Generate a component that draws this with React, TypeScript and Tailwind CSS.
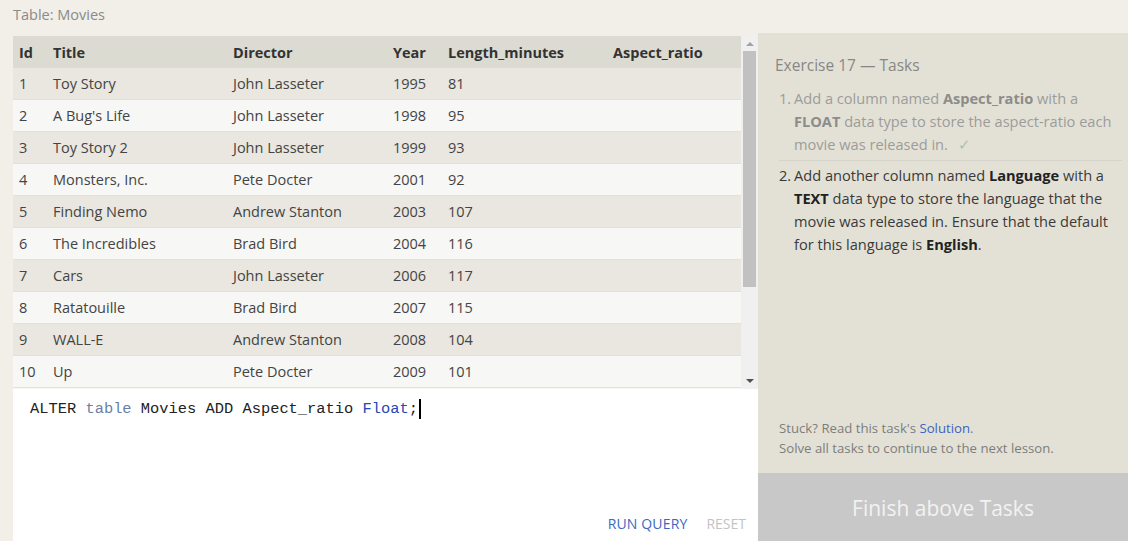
import React from 'react';

const movies = [
  { id: 1, title: 'Toy Story', director: 'John Lasseter', year: 1995, len: 81 },
  { id: 2, title: "A Bug's Life", director: 'John Lasseter', year: 1998, len: 95 },
  { id: 3, title: 'Toy Story 2', director: 'John Lasseter', year: 1999, len: 93 },
  { id: 4, title: 'Monsters, Inc.', director: 'Pete Docter', year: 2001, len: 92 },
  { id: 5, title: 'Finding Nemo', director: 'Andrew Stanton', year: 2003, len: 107 },
  { id: 6, title: 'The Incredibles', director: 'Brad Bird', year: 2004, len: 116 },
  { id: 7, title: 'Cars', director: 'John Lasseter', year: 2006, len: 117 },
  { id: 8, title: 'Ratatouille', director: 'Brad Bird', year: 2007, len: 115 },
  { id: 9, title: 'WALL-E', director: 'Andrew Stanton', year: 2008, len: 104 },
  { id: 10, title: 'Up', director: 'Pete Docter', year: 2009, len: 101 },
];

const cols = 'grid grid-cols-[33px_180px_160px_55px_165px_135px]';

export default function App() {
  return (
    <div className="w-[1128px] h-[541px] bg-[#f1efe8] flex flex-col overflow-hidden font-['Open_Sans',sans-serif]">
      {/* title */}
      <div className="h-[33px] flex items-center px-[13px] text-[14.5px] text-[#8a8a8a] pb-[4px]">
        Table: Movies
      </div>

      <div className="flex flex-1 min-h-0">
        {/* left: table + editor */}
        <div className="ml-[13px] w-[745px] flex flex-col mt-[3px]">
          <div className="h-[353px] flex">
            <div className="w-[728px] bg-[#f7f7f5] overflow-hidden">
              <div className={`${cols} h-[32px] items-center bg-[#dcdbd1] text-[14.5px] font-bold text-[#333] pt-[1px]`}>
                <div className="pl-[6px]">Id</div>
                <div className="pl-[7px]">Title</div>
                <div className="pl-[7px]">Director</div>
                <div className="pl-[7px]">Year</div>
                <div className="pl-[7px]">Length_minutes</div>
                <div className="pl-[7px]">Aspect_ratio</div>
              </div>
              {movies.map((m, i) => (
                <div
                  key={m.id}
                  className={`${cols} h-[32px] items-center border-b border-[#e3e1d9] text-[14.5px] text-[#444] pt-[1px] ${
                    i % 2 === 0 ? 'bg-[#e9e7e0]' : 'bg-[#f7f7f6]'
                  }`}
                >
                  <div className="pl-[6px]">{m.id}</div>
                  <div className="pl-[7px]">{m.title}</div>
                  <div className="pl-[7px]">{m.director}</div>
                  <div className="pl-[7px]">{m.year}</div>
                  <div className="pl-[7px]">{m.len}</div>
                  <div className="pl-[7px]"></div>
                </div>
              ))}
            </div>
            {/* scrollbar */}
            <div className="w-[17px] bg-[#f0f0f0] flex flex-col items-center">
              <div className="h-[15px] flex items-center justify-center">
                <div className="w-0 h-0 border-l-[4px] border-r-[4px] border-b-[4px] border-l-transparent border-r-transparent border-b-[#a3a3a3]" />
              </div>
              <div className="w-[13px] h-[236px] bg-[#c1c1c1]" />
              <div className="flex-1" />
              <div className="h-[17px] flex items-center justify-center">
                <div className="w-0 h-0 border-l-[4px] border-r-[4px] border-t-[4px] border-l-transparent border-r-transparent border-t-[#505050]" />
              </div>
            </div>
          </div>

          {/* editor */}
          <div className="flex-1 bg-white flex flex-col">
            <div className="pt-[9px] pl-[17px] font-['Liberation_Mono',monospace] text-[15.4px] text-[#222] leading-[22px] flex items-center">
              <span>ALTER </span>
              <span className="text-[#6a7fa8]">&nbsp;table</span>
              <span>&nbsp;Movies ADD Aspect_ratio </span>
              <span className="text-[#2647b5]">&nbsp;Float</span>
              <span>;</span>
              <span className="inline-block w-[2px] h-[20px] bg-black ml-[1px]" />
            </div>
            <div className="flex-1" />
            <div className="flex justify-end items-center gap-[19px] pr-[12px] pb-[7px] text-[14px]">
              <span className="text-[#3d68c2] tracking-[0.15px]">RUN QUERY</span>
              <span className="text-[#c3c3c3]">RESET</span>
            </div>
          </div>
        </div>

        {/* right: tasks */}
        <div className="flex-1 bg-[#e3e1d6] flex flex-col">
          <div className="flex-1 pl-[17px] pr-[6px] pt-[21px]">
            <div className="text-[15.5px] text-[#878787]">Exercise 17 — Tasks</div>
            <ol className="mt-[10px] text-[14.6px] leading-[23px]">
              <li className="flex text-[#9c9c9a] pb-[4px] border-b border-[#d6d4ca] ml-[4px]">
                <span className="w-[15px] shrink-0">1.</span>
                <span>
                  Add a column named <b className="text-[#8c8c8a]">Aspect_ratio</b> with a{' '}
                  <b className="text-[#8c8c8a]">FLOAT</b> data type to store the aspect-ratio each movie was
                  released in. <span className="text-[#a7c4a7] ml-[6px]">✓</span>
                </span>
              </li>
              <li className="flex text-[#3a3a3a] pt-[3px] ml-[4px]">
                <span className="w-[15px] shrink-0">2.</span>
                <span>
                  Add another column named <b className="text-[#222]">Language</b> with a{' '}
                  <b className="text-[#222]">TEXT</b> data type to store the language that the movie was released
                  in. Ensure that the default for this language is <b className="text-[#222]">English</b>.
                </span>
              </li>
            </ol>
          </div>
          <div className="pl-[21px] pb-[15px] text-[13.2px] leading-[20px] text-[#7d7d7d]">
            <div>
              Stuck? Read this task's <span className="text-[#3d62bf]">Solution</span>.
            </div>
            <div>Solve all tasks to continue to the next lesson.</div>
          </div>
          <div className="h-[68px] bg-[#c8c8c8] flex items-center justify-center text-[21px] text-[#f2f2f2] pt-[3px]">
            Finish above Tasks
          </div>
        </div>
      </div>
    </div>
  );
}
